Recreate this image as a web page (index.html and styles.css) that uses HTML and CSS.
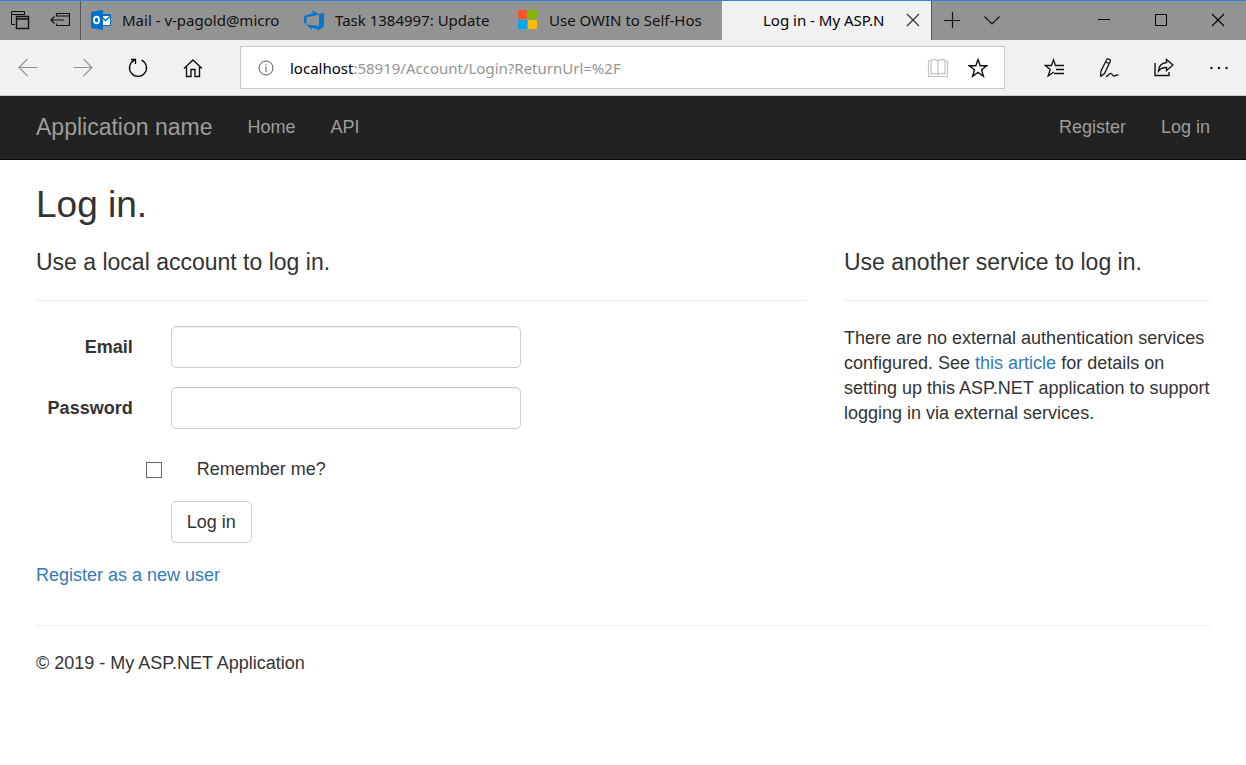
FILE: index.html
```html
<!DOCTYPE html>
<html lang="en">
<head>
<meta charset="utf-8">
<title>Log in - My ASP.NET Application</title>
<meta name="viewport" content="width=device-width, initial-scale=1">
<link rel="stylesheet" href="styles.css">
</head>
<body>
<div class="browser">
  <div class="tabstrip">
    <div class="tab-tools">
      <button class="tool" type="button" aria-label="Tabs you've set aside">
        <svg width="20" height="20" viewBox="0 0 20 20" fill="none" stroke="#111" stroke-width="1"><path d="M5 14.500H1.500V1.500H14.500V5M1.500 4.500H14.500"/><path d="M6.500 6.500H18.500V18.500H6.500ZM6.500 9H18.500" stroke-width="1.400"/></svg>
      </button>
      <button class="tool" type="button" aria-label="Set these tabs aside">
        <svg width="20" height="20" viewBox="0 0 20 20" fill="none" stroke="#111" stroke-width="1.200"><path d="M6.500 6.500V3.500H19.500V15.500H6.500V13.500M6.500 6H19.500M1 10H14M4.500 6.500L1 10L4.500 13.500"/></svg>
      </button>
    </div>
    <a class="tab" href="#mail">
      <svg class="tab-icon" width="20" height="20" viewBox="0 0 20 20"><path d="M9 4H20V16H9Z" fill="#0072c6"/><path d="M10 6H19V15H10Z" fill="#fff"/><path d="M9 5.500L14.500 10.500L20 5.500" fill="none" stroke="#0072c6" stroke-width="1.300"/><path d="M0 2L12 0V20L0 18Z" fill="#0072c6"/><ellipse cx="5.500" cy="10" rx="2.500" ry="3.400" fill="none" stroke="#fff" stroke-width="1.800"/></svg>
      <span class="tab-title">Mail - v-pagold@micro</span>
    </a>
    <a class="tab" href="#task">
      <svg class="tab-icon" width="20" height="20" viewBox="0 0 20 20"><path d="M0 6L8.500 3.200V0.500L15 4L20 2.800V16.500L15.500 20L7.500 17.500V20L2.500 14.500L15 16V4.800L2.500 7.200V14.500L0 12.500Z" fill="#0078d4"/></svg>
      <span class="tab-title">Task 1384997: Update</span>
    </a>
    <a class="tab" href="#owin">
      <svg class="tab-icon" width="20" height="20" viewBox="0 0 20 20"><path d="M0 0H9V9H0Z" fill="#f1592a"/><path d="M10 0H19V9H10Z" fill="#7fba00"/><path d="M0 10H9V19H0Z" fill="#00a4ef"/><path d="M10 10H19V19H10Z" fill="#ffb900"/></svg>
      <span class="tab-title">Use OWIN to Self-Hos</span>
    </a>
    <div class="tab tab-active">
      <span class="tab-icon tab-icon-blank"></span>
      <span class="tab-title">Log in - My ASP.N</span>
      <button class="tab-close" type="button" aria-label="Close tab">
        <svg width="14" height="14" viewBox="0 0 14 14" fill="none" stroke="#333" stroke-width="1.200"><path d="M1 1L13 13M13 1L1 13"/></svg>
      </button>
    </div>
    <div class="tab-tools">
      <button class="tool" type="button" aria-label="New tab">
        <svg width="18" height="18" viewBox="0 0 18 18" fill="none" stroke="#111" stroke-width="1.200"><path d="M1 9.500H17M9.500 1V17"/></svg>
      </button>
      <button class="tool" type="button" aria-label="Tab previews">
        <svg width="18" height="18" viewBox="0 0 18 18" fill="none" stroke="#111" stroke-width="1.100"><path d="M1.500 5.500L9 13L16.500 5.500"/></svg>
      </button>
    </div>
    <div class="window-buttons">
      <button class="bar-button" type="button" aria-label="Minimize">
        <svg width="14" height="14" viewBox="0 0 14 14" stroke="#000"><path d="M1 6.500H13"/></svg>
      </button>
      <button class="bar-button" type="button" aria-label="Maximize">
        <svg width="14" height="14" viewBox="0 0 14 14" fill="none" stroke="#000"><path d="M1.500 1.500H12.500V12.500H1.500Z"/></svg>
      </button>
      <button class="bar-button" type="button" aria-label="Close">
        <svg width="14" height="14" viewBox="0 0 14 14" fill="none" stroke="#000" stroke-width="1.100"><path d="M1 1L13 13M13 1L1 13"/></svg>
      </button>
    </div>
  </div>

  <div class="toolbar">
    <button class="bar-button" type="button" aria-label="Back" disabled>
      <svg width="20" height="20" viewBox="0 0 20 20" fill="none" stroke="#929292" stroke-width="1.100"><path d="M1 9.500H19.500M9.500 1L1 9.500L9.500 18"/></svg>
    </button>
    <button class="bar-button" type="button" aria-label="Forward" disabled>
      <svg width="20" height="20" viewBox="0 0 20 20" fill="none" stroke="#929292" stroke-width="1.100"><path d="M0.500 9.500H19M10.500 1L19 9.500L10.500 18"/></svg>
    </button>
    <button class="bar-button" type="button" aria-label="Refresh">
      <svg width="20" height="20" viewBox="0 0 20 20" fill="none" stroke="#000" stroke-width="1.300"><path d="M13.500 2.200A8.500 8.500 0 1 1 6.500 2.200M3 1.500H7.500V6"/></svg>
    </button>
    <button class="bar-button" type="button" aria-label="Home">
      <svg width="20" height="20" viewBox="0 0 20 20" fill="none" stroke="#111" stroke-width="1.400"><path d="M1 10.500L10 2L19 10.500M3.500 9V18.500H8V11.500H12V18.500H16.500V9"/></svg>
    </button>
    <div class="address">
      <button class="address-button" type="button" aria-label="Site information">
        <svg width="16" height="16" viewBox="0 0 16 16" fill="none" stroke="#555"><circle cx="8" cy="8" r="7"/><path d="M8 6.500V12M8 4V5.200"/></svg>
      </button>
      <div class="address-text" role="textbox" aria-label="Address" contenteditable="true" spellcheck="false"><span class="address-host">localhost</span>:58919/Account/Login?ReturnUrl=%2F</div>
      <div class="address-actions">
        <button class="address-button" type="button" aria-label="Reading view" disabled>
          <svg width="22" height="20" viewBox="0 0 22 20" fill="none" stroke="#c4c4c4" stroke-width="1.200"><path d="M11 3V16.500M11 3C9.500 1.500 5.500 1.200 4 2V16C6 15.200 9.500 15.500 11 16.500C12.500 15.500 16 15.200 18 16V2C16.500 1.200 12.500 1.500 11 3M4 3H1.500V18.500H20.500V3H18"/></svg>
        </button>
        <button class="address-button" type="button" aria-label="Add to favorites">
          <svg width="20" height="20" viewBox="0 0 20 20" fill="none" stroke="#111" stroke-width="1.400"><path d="M10 1.500L12.200 7.800H18.700L13.500 11.800L15.400 18.200L10 14.400L4.600 18.200L6.500 11.800L1.300 7.800H7.800Z"/></svg>
        </button>
      </div>
    </div>
    <button class="bar-button" type="button" aria-label="Hub">
      <svg width="20" height="20" viewBox="0 0 20 20" fill="none" stroke="#111" stroke-width="1.300"><path d="M15.500 7.500H11.500L9.500 1.800L7.500 7.500H1.200L6.200 11.500L4.200 17.800L9.800 14M11.500 7.500H20M12 11.500H20M10 15.500H20"/></svg>
    </button>
    <button class="bar-button" type="button" aria-label="Make a web note">
      <svg width="20" height="20" viewBox="0 0 20 20" fill="none" stroke="#111" stroke-width="1.300"><path d="M1.500 18.500L2 13L7.500 2C8.500 0 12 1 11.200 3.500L5.500 15.500L1.500 18.500M6.500 4L10 5.500M7 18.500C9 18.500 10 15 12 15.500C13.500 16 13.500 18 15 18C17 18 17 16.500 19.500 17"/></svg>
    </button>
    <button class="bar-button" type="button" aria-label="Share">
      <svg width="20" height="20" viewBox="0 0 20 20" fill="none" stroke="#111" stroke-width="1.400"><path d="M1 5V17.500H15V14M12.500 1.500L19 7L12.500 12.500V9.500C8.500 9.200 6.500 10.500 4.500 13C4.800 8 7.500 5 12.500 4.500Z"/></svg>
    </button>
    <button class="bar-button" type="button" aria-label="More">
      <svg width="20" height="20" viewBox="0 0 20 20" fill="#111"><circle cx="2.500" cy="10" r="1.200"/><circle cx="10" cy="10" r="1.200"/><circle cx="17.500" cy="10" r="1.200"/></svg>
    </button>
  </div>
</div>

<nav class="navbar">
  <a class="navbar-brand" href="#">Application name</a>
  <a class="navbar-link" href="#home">Home</a>
  <a class="navbar-link" href="#api">API</a>
  <div class="navbar-right">
    <a class="navbar-link" href="#register">Register</a>
    <a class="navbar-link" href="#login">Log in</a>
  </div>
</nav>

<main class="container">
  <h2 class="page-title">Log in.</h2>
  <div class="row">
    <section class="column">
      <h4 class="section-title">Use a local account to log in.</h4>
      <hr class="rule">
      <form class="form">
        <div class="form-group">
          <label class="control-label" for="email">Email</label>
          <div class="control"><input class="form-control" id="email" type="email"></div>
        </div>
        <div class="form-group">
          <label class="control-label" for="password">Password</label>
          <div class="control"><input class="form-control" id="password" type="password"></div>
        </div>
        <div class="form-group">
          <div class="control control-offset checkbox">
            <input class="checkbox-input" id="remember" type="checkbox">
            <label for="remember">Remember me?</label>
          </div>
        </div>
        <div class="form-group">
          <div class="control control-offset"><button class="btn" type="submit">Log in</button></div>
        </div>
      </form>
      <p class="register"><a class="link" href="#register">Register as a new user</a></p>
    </section>
    <section class="column">
      <h4 class="section-title">Use another service to log in.</h4>
      <hr class="rule">
      <p class="text text-wide">There are no external authentication services configured. See <a class="link" href="#article">this article</a> for details on setting up this ASP.NET application to support logging in via external services.</p>
    </section>
  </div>
  <hr class="rule">
  <footer class="footer"><p class="text">© 2019 - My ASP.NET Application</p></footer>
</main>
</body>
</html>
```

FILE: styles.css
```css
* {
  box-sizing: border-box;
}

body {
  margin: 0;
  background: #fff;
  color: #333;
  font-family: "Liberation Sans", Arial, sans-serif;
  font-size: 18px;
  line-height: 25px;
}

button {
  font: inherit;
  color: inherit;
}

/* Browser window */

.browser {
  font-family: "Noto Sans", "Segoe UI", sans-serif;
  font-size: 15px;
  line-height: 22px;
  color: #111;
}

.tabstrip {
  display: flex;
  height: 40px;
  padding-bottom: 1px;
  border-top: 1px solid #2b88d8;
  background: #939393;
}

.tab-tools {
  display: flex;
}

.tool,
.bar-button,
.tab-close,
.address-button {
  display: flex;
  align-items: center;
  justify-content: center;
  flex: none;
  padding: 0;
  border: 0;
  background: none;
}

.tool {
  width: 40px;
}

.tab {
  display: flex;
  align-items: center;
  flex: 0 1 214px;
  gap: 11px;
  min-width: 0;
  margin-bottom: -1px;
  padding: 0 11px 1px 10px;
  color: #111;
  text-decoration: none;
}

.tab-tools + .tab {
  border-left: 1px solid #555;
}

.tab-icon {
  flex: none;
  width: 20px;
}

.tab-title {
  flex: 1;
  min-width: 0;
  overflow: hidden;
  white-space: nowrap;
}

.tab-active {
  flex-basis: 210px;
  border-right: 1px solid #555;
  background: #f1f1f1;
  color: #000;
}

.tab-close {
  width: 14px;
}

.window-buttons {
  display: flex;
  margin-left: auto;
}

.bar-button {
  width: 55px;
}

.window-buttons .bar-button {
  width: 57px;
}

.toolbar {
  display: flex;
  align-items: center;
  height: 56px;
  border-bottom: 1px solid #c8cec8;
  background: #f1f1f1;
}

.address {
  display: flex;
  align-items: center;
  flex: 1;
  gap: 16px;
  min-width: 0;
  height: 43px;
  margin: 0 21px 0 20px;
  padding: 0 16px 0 17px;
  border: 1px solid #c8c8c8;
  background: #fff;
}

.address-text {
  flex: 1;
  min-width: 0;
  overflow: hidden;
  white-space: nowrap;
  color: #959595;
}

.address-host {
  color: #000;
}

.address-actions {
  display: flex;
  gap: 19px;
}

/* Site navigation */

.navbar {
  display: flex;
  align-items: center;
  gap: 35px;
  height: 64px;
  padding: 0 36px;
  border-bottom: 1px solid #080808;
  background: #222;
}

.navbar-brand,
.navbar-link {
  color: #9d9d9d;
  text-decoration: none;
}

.navbar-brand {
  font-size: 23px;
}

.navbar-right {
  display: flex;
  gap: 35px;
  margin-left: auto;
}

/* Page content */

.container {
  padding: 24px 36px;
}

.page-title {
  margin: 0 0 24px;
  font-size: 37px;
  font-weight: 400;
  line-height: 42px;
}

.row {
  display: grid;
  grid-template-columns: 2fr 1fr;
  margin: 0 -19px;
}

.column {
  min-width: 0;
  padding: 0 19px;
}

.section-title {
  margin: 0;
  font-size: 23px;
  font-weight: 400;
  line-height: 25px;
}

.rule {
  margin: 25px 0;
  border: 0;
  border-top: 1px solid #eee;
}

.text {
  margin: 0;
}

.text-wide {
  margin-right: -8px;
}

.link {
  color: #337ab7;
  text-decoration: none;
}

.form {
  display: flex;
  flex-direction: column;
  gap: 19px;
  margin: 0 -19px;
}

.form-group {
  display: grid;
  grid-template-columns: 1fr 5fr;
  align-items: center;
}

.control-label {
  padding: 0 19px;
  font-weight: 700;
  text-align: right;
}

.control {
  padding: 0 19px;
}

.control-offset {
  grid-column: 2;
}

.form-control,
.btn {
  display: block;
  height: 42px;
  border: 1px solid #ccc;
  border-radius: 5px;
  background: #fff;
  font: inherit;
}

.form-control {
  width: 100%;
  max-width: 350px;
  padding: 0 15px;
  box-shadow: inset 0 1px 1px rgba(0, 0, 0, 0.075);
}

.btn {
  padding: 0 15px;
}

.checkbox {
  display: flex;
  align-items: center;
  gap: 35px;
  padding-top: 9px;
}

.checkbox-input {
  appearance: none;
  width: 16px;
  height: 16px;
  margin: 0 0 0 -25px;
  border: 1px solid #666;
  background: #fff;
}

.checkbox-input:checked {
  background: #337ab7;
}

.register {
  margin: 20px 0 12px;
}
```
